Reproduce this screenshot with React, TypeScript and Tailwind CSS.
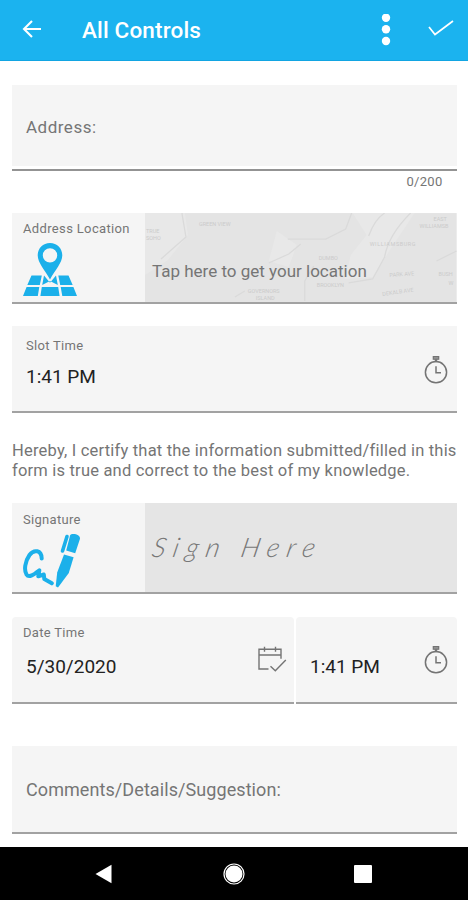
import type { ReactNode } from "react";
import clsx from "clsx";

interface FieldProps {
  className?: string;
  children?: ReactNode;
}

function Field({ className, children }: FieldProps) {
  return <div className={clsx("flex border-b-2 border-[#a2a2a2] bg-[#f5f5f5]", className)}>{children}</div>;
}

function StopwatchIcon() {
  return (
    <svg className="h-[30px] w-6 shrink-0" viewBox="0 0 24 30" fill="none" stroke="#747474" strokeWidth="1.5" aria-hidden>
      <rect x="9.3" y="1.6" width="5.4" height="2.6" fill="#9a9a9a" strokeWidth="1.2" />
      <path d="M12 4.2v3" strokeWidth="2.4" />
      <circle cx="12" cy="17.2" r="10.6" />
      <path d="M12 11.2v6.5h5" />
    </svg>
  );
}

function CalendarIcon() {
  return (
    <svg className="h-[26px] w-[30px] shrink-0" viewBox="0 0 30 26" fill="none" stroke="#747474" strokeWidth="1.4" aria-hidden>
      <path d="M11.5 23H2V3.3h22v9.5M2 9h22M7.5.8v5M18.5.8v5" />
      <path d="M13.5 20.2l4.8 4.6L28.8 14" />
    </svg>
  );
}

function MapPinIcon() {
  return (
    <svg className="h-[54px] w-[54px]" viewBox="0 0 54 54" fill="#1bb0ea" aria-hidden>
      <path
        fillRule="evenodd"
        d="M27 0C20 0 14.7 5.4 14.7 12.3C14.7 20 22 27 27 36.5C32 27 39.3 20 39.3 12.3C39.3 5.4 34 0 27 0ZM27 5.2a7.2 7.2 0 1 1 0 14.4a7.2 7.2 0 0 1 0-14.4Z"
      />
      <path d="M8.5 32.5h10.3l-2 9.6H4.3zM21 32.5l6 7.2 6-7.2 1.8 9.6-7.8-4-7.8 4zM35.3 32.5h10.2l4.2 9.6H37.2z" />
      <path d="M3.6 44h12.7l-1.5 9H0zM18.8 44h16.4l1.4 9H17.4zM37.7 44h12.7L54 53H39.3z" />
    </svg>
  );
}

function SignatureIcon() {
  return (
    <svg className="h-[55px] w-[58px]" viewBox="0 0 58 55" fill="none" stroke="#1bb0ea" aria-hidden>
      <path
        d="M18.7 25.5C18.5 17 11 16 6.5 22C2 28.5 .8 37 3.5 41.5C6 45.5 11.5 41 16.3 37.3L15.3 43.3L20.8 41.5L21.3 46L28.8 50.3"
        strokeWidth="4"
        strokeLinecap="round"
        strokeLinejoin="round"
      />
      <path d="M44 3.5L39.5 18" strokeWidth="3.6" strokeLinecap="round" />
      <path d="M48.3 1.2C52 .2 57.5 2 57 5.8L52.2 20.2L43.2 17.4L46.7 4C47 2.5 47 1.6 48.3 1.2Z" fill="#1bb0ea" stroke="none" />
      <path d="M41 21.5L50.6 24.2L45.8 40L35 54.5L32.7 53.2L34.2 39.5Z" fill="#1bb0ea" stroke="none" />
    </svg>
  );
}

function FaintMap() {
  return (
    <svg className="absolute inset-0 h-full w-full" viewBox="0 0 312 89" aria-hidden>
      <rect width="312" height="89" fill="#e4e4e4" />
      <path d="M40 0l3 22-20 25L0 62V0zM132 18l20 14-8 22-20-6zM208 0h62l-24 36-18 28-28 2 6-24 16-20z" fill="#e8e8e8" />
      <g fill="none" stroke="#dadada" strokeWidth="1.3">
        <path d="M37 0l4 24L16 46M207 0l-6 16-20 10-38 0M240 0c-8 5-12 12-16 23M266 0c-18 18-24 32-26 44l-12 22-24 4" />
        <path d="M124 50l20-9 12-10M292 48l20-10M160 88v-20l9-15M90 84l10-6" />
      </g>
      <g fill="#cbcbcb" fontFamily="Roboto, sans-serif" fontSize="5.5">
        <text x="54" y="13">GREEN VIEW</text>
        <text x="1" y="20">TRUE</text>
        <text x="1" y="27">SOHO</text>
        <text x="225" y="33" textLength="46">WILLIAMSBURG</text>
        <text x="289" y="8">EAST</text>
        <text x="275" y="15">WILLIAMSB</text>
        <text x="174" y="47">DUMBO</text>
        <text x="172" y="74">BROOKLYN</text>
        <text x="103" y="80">GOVERNORS</text>
        <text x="111" y="87">ISLAND</text>
        <text x="245" y="64" transform="rotate(-4 245 64)">PARK AVE</text>
        <text x="238" y="83" transform="rotate(-8 238 83)">DEKALB AVE</text>
        <text x="294" y="63">BUSH</text>
        <text x="304" y="72">W</text>
      </g>
    </svg>
  );
}

export default function App() {
  return (
    <div className="flex h-[900px] w-[468px] flex-col overflow-hidden bg-white font-['Roboto',sans-serif] text-[#757575]">
      <header className="flex h-[60.5px] shrink-0 items-center border-b border-[#12a5e2] bg-[#1bb3ef] text-white">
        <svg className="ml-[22px] h-5 w-5" viewBox="0 0 20 20" fill="none" stroke="white" strokeWidth="2.1" aria-hidden>
          <path d="M19 9H2M10 1L2 9l8 8" />
        </svg>
        <h1 className="ml-10 flex-1 text-[22.5px] leading-7 font-medium tracking-[0.15px]">All Controls</h1>
        <svg className="h-8 w-2.5" viewBox="0 0 10 32" fill="white" aria-hidden>
          <circle cx="5" cy="3.7" r="4.2" />
          <circle cx="5" cy="15.2" r="4.2" />
          <circle cx="5" cy="27" r="4.2" />
        </svg>
        <svg className="mr-3.5 mb-1 ml-[37px] h-4 w-[26px]" viewBox="0 0 26 16" fill="none" stroke="white" strokeWidth="1.7" aria-hidden>
          <path d="M1 7l6 7.5L25 1" />
        </svg>
      </header>

      <main className="flex flex-1 flex-col pr-[11.5px] pl-3">
        <div className="mt-6 h-[86px] border-b-2 border-[#939393] pb-[3px]">
          <div className="flex h-full items-center bg-[#f5f5f5] pt-[5px] pl-3.5 text-[17px] tracking-[0.5px]">Address:</div>
        </div>
        <div className="mr-3.5 flex h-[42px] justify-end pt-[3px] text-[13px] leading-4 tracking-[0.3px]">0/200</div>

        <Field className="h-[91px]">
          <div className="w-[133px] pl-[11px]">
            <div className="pt-2 text-[13px] leading-4 tracking-[0.35px]">Address Location</div>
            <div className="mt-[6px]">
              <MapPinIcon />
            </div>
          </div>
          <div className="relative flex-1 overflow-hidden">
            <FaintMap />
            <p className="relative mt-12 ml-[7px] text-[17px] leading-5">Tap here to get your location</p>
          </div>
        </Field>

        <Field className="mt-[22px] h-[87px] items-center justify-between pr-[9px] pl-3.5">
          <div className="self-start pt-3">
            <div className="text-[13px] leading-4 tracking-[0.3px]">Slot Time</div>
            <div className="mt-[11px] text-[19px] leading-6 text-[#222]">1:41 PM</div>
          </div>
          <div className="pt-[3px]">
            <StopwatchIcon />
          </div>
        </Field>

        <p className="mt-7 h-10 text-[16.5px] leading-5 tracking-[0.2px] whitespace-nowrap">
          Hereby, I certify that the information submitted/filled in this
          <br />
          form is true and correct to the best of my knowledge.
        </p>

        <Field className="mt-[22px] h-[91px]">
          <div className="w-[133px] pl-[11px]">
            <div className="pt-[9px] text-[13px] leading-4 tracking-[0.3px]">Signature</div>
            <div className="mt-[5px]">
              <SignatureIcon />
            </div>
          </div>
          <div className="flex-1 bg-[#e5e5e5]">
            <p className="mt-6 ml-2 -skew-x-12 font-['Lato',cursive] text-[27px] leading-10 font-light tracking-[7.3px] text-[#777] italic">
              Sign Here
            </p>
          </div>
        </Field>

        <div className="mt-[23px] flex gap-0.5">
          <Field className="h-[87px] w-[282px] justify-between rounded-t-sm pr-[7px] pl-[11px]">
            <div className="pt-2">
              <div className="text-[13px] leading-4 tracking-[0.3px]">Date Time</div>
              <div className="mt-[14px] ml-[3px] text-[19px] leading-6 text-[#222]">5/30/2020</div>
            </div>
            <div className="pt-[29px]">
              <CalendarIcon />
            </div>
          </Field>
          <Field className="h-[87px] flex-1 justify-between rounded-t-sm pr-[9px] pl-3.5">
            <div className="pt-[38px] text-[19px] leading-6 text-[#222]">1:41 PM</div>
            <div className="pt-7">
              <StopwatchIcon />
            </div>
          </Field>
        </div>

        <Field className="mt-[42px] h-[88px] items-center">
          <span className="mt-0.5 ml-3.5 text-[18px] tracking-[0.08px]">Comments/Details/Suggestion:</span>
        </Field>
      </main>

      <nav className="flex h-[53px] shrink-0 items-center bg-black">
        <svg className="ml-[95px] h-5 w-[18px]" viewBox="0 0 18 20" fill="white" aria-hidden>
          <path d="M.5 10L16.5.8v18.4z" />
        </svg>
        <svg className="ml-[110px] h-[22px] w-[22px]" viewBox="0 0 22 22" aria-hidden>
          <circle cx="11" cy="11" r="10" fill="black" stroke="white" strokeWidth="1.2" />
          <circle cx="11" cy="11" r="8.5" fill="white" />
        </svg>
        <div className="ml-[109px] h-[18px] w-[18px] rounded-[1px] bg-white" />
      </nav>
    </div>
  );
}
